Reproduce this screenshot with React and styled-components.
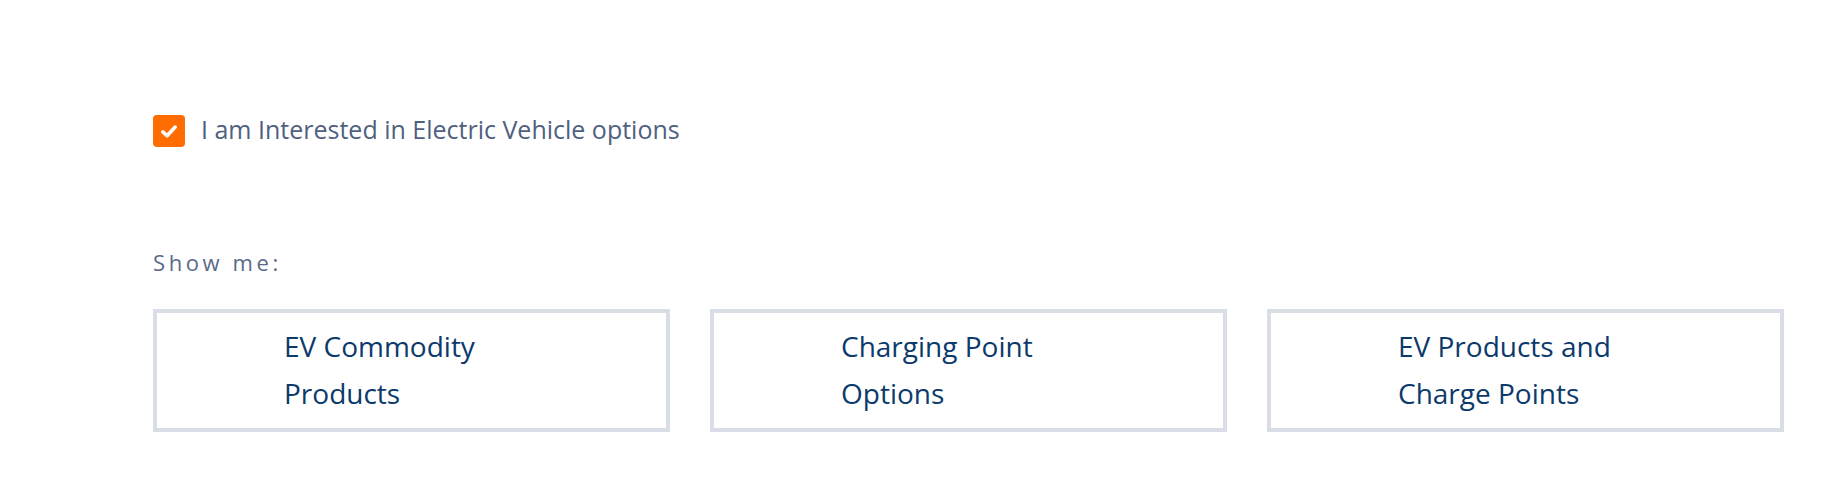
import styled, { createGlobalStyle } from "styled-components";
import { useState } from "react";

const GlobalStyle = createGlobalStyle`
  body {
    margin: 0;
    background: #ffffff;
    font-family: "Open Sans", "Noto Sans", sans-serif;
  }
`;

const options = [
  { id: "commodity", label: "EV Commodity Products" },
  { id: "charging", label: "Charging Point Options" },
  { id: "both", label: "EV Products and Charge Points" },
];

export default function App() {
  const [interested, setInterested] = useState(true);

  return (
    <Page>
      <GlobalStyle />
      <CheckRow onClick={() => setInterested(!interested)}>
        <CheckBox checked={interested}>
          {interested && (
            <svg width="18" height="18" viewBox="0 0 16 16">
              <polyline
                points="2.5,8.8 6.3,12.2 13.5,4.5"
                fill="none"
                stroke="#ffffff"
                strokeWidth="3.2"
                strokeLinecap="round"
                strokeLinejoin="round"
              />
            </svg>
          )}
        </CheckBox>
        <CheckLabel>I am Interested in Electric Vehicle options</CheckLabel>
      </CheckRow>

      <ShowLabel>Show me:</ShowLabel>
      <OptionGrid>
        {options.map(({ id, label }) => (
          <OptionCard key={id}>
            <OptionText>{label}</OptionText>
          </OptionCard>
        ))}
      </OptionGrid>
    </Page>
  );
}

const Page = styled.div`
  padding: 115px 44px 48px 153px;
`;

const CheckRow = styled.label`
  display: flex;
  align-items: flex-start;
  gap: 16px;
  cursor: pointer;
`;

const CheckBox = styled.span`
  width: 32px;
  height: 32px;
  border-radius: 4px;
  background: ${(props) => (props.checked ? "#ff6c00" : "#ffffff")};
  border: ${(props) => (props.checked ? "none" : "2px solid #d8dde6")};
  display: flex;
  align-items: center;
  justify-content: center;
  flex-shrink: 0;
`;

const CheckLabel = styled.span`
  font-size: 25px;
  line-height: 28px;
  color: #50607f;
`;

const ShowLabel = styled.p`
  margin: 100px 0 0;
  font-size: 22px;
  line-height: 30px;
  letter-spacing: 3.6px;
  color: #5a6a8a;
`;

const OptionGrid = styled.div`
  display: grid;
  grid-template-columns: repeat(3, 1fr);
  gap: 40px;
  margin-top: 32px;
`;

const OptionCard = styled.div`
  height: 123px;
  box-sizing: border-box;
  border: 4px solid #d8dde6;
  padding: 0 40px 0 127px;
  display: flex;
  align-items: center;
`;

const OptionText = styled.span`
  max-width: 240px;
  font-size: 28px;
  line-height: 47px;
  margin-bottom: 2px;
  color: #0c3a6b;
`;
